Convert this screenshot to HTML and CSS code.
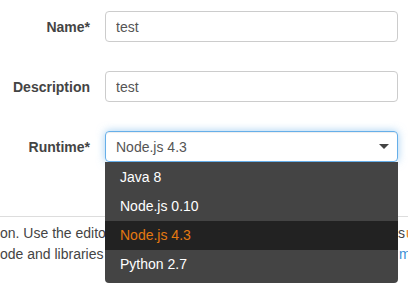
FILE: index.html
```html
<!DOCTYPE html>
<html lang="en">
<head>
    <meta charset="UTF-8" />
    <meta name="viewport" content="width=device-width, initial-scale=1.0"/>
    <title>Configure function</title>
    <link rel="stylesheet" href="styles.css">
</head>
<body>
<form class="fn-form">
    <div class="form-group">
        <label for="fnName">Name*</label>
        <input class="text-input" type="text" id="fnName" value="test">
    </div>
    <div class="form-group">
        <label for="fnDesc">Description</label>
        <input class="text-input" type="text" id="fnDesc" value="test">
    </div>
    <div class="form-group">
        <label>Runtime*</label>
        <div class="select-wrap">
            <div class="select-box">
                <span>Node.js 4.3</span>
                <svg class="caret" width="10" height="5" viewBox="0 0 10 5"><path d="M0 0H10L5 5Z" fill="#444"/></svg>
            </div>
            <ul class="select-menu">
                <li>Java 8</li>
                <li>Node.js 0.10</li>
                <li class="active">Node.js 4.3</li>
                <li>Python 2.7</li>
            </ul>
        </div>
    </div>
</form>

<div class="code-help">
    <div class="help-line">
        <span class="help-main">on. Use the editor if your code does not require custom libraries (other than the aws-sdk). If you need custom librarie</span>
        <span>s</span><a class="link-orange" href="#">upload</a>
    </div>
    <div class="help-line">
        <span class="help-main">ode and libraries as a .ZIP file. Learn more about deploying Lambda functions with your own code fro</span>
        <a class="link-blue" href="#">m</a>
    </div>
</div>
</body>
</html>
```

FILE: styles.css
```css
html, body {
    height: 100%;
}

body {
    font-family: 'Liberation Sans', Arial, sans-serif;
    font-size: 14px;
    margin: 0;
    padding: 0;
    background-color: #fff;
    color: #444;
    min-height: 290px;
    overflow-x: hidden;
}

.fn-form {
    padding: 11px 10px 54px 0;
    margin: 0;
}

.form-group {
    display: grid;
    grid-template-columns: 90px 1fr;
    column-gap: 15px;
    align-items: center;
    margin-bottom: 29px;
}

.form-group:last-child {
    margin-bottom: 0;
}

.form-group label {
    text-align: right;
    font-weight: bold;
    color: #444;
}

.text-input {
    width: 100%;
    height: 31px;
    padding: 0 10px;
    border: 1px solid #ccc;
    border-radius: 4px;
    font-family: inherit;
    font-size: 14px;
    color: #555;
    box-sizing: border-box;
    outline: none;
}

.select-wrap {
    position: relative;
}

.select-box {
    height: 31px;
    box-sizing: border-box;
    display: flex;
    align-items: center;
    justify-content: space-between;
    padding: 0 8px 0 10px;
    border: 1px solid #66afe9;
    border-radius: 4px;
    color: #555;
    box-shadow: inset 0 1px 1px rgba(0,0,0,0.075), 0 0 8px rgba(102,175,233,0.6);
}

.caret {
    display: block;
}

.select-menu {
    position: absolute;
    top: 100%;
    left: 0;
    right: 0;
    z-index: 5;
    list-style: none;
    margin: 0;
    padding: 1px 0 4px;
    background-color: #444;
    border-radius: 0 0 4px 4px;
}

.select-menu li {
    height: 29px;
    line-height: 29px;
    padding-left: 15px;
    color: #fff;
}

.select-menu li.active {
    background-color: #222;
    color: #e47911;
}

.code-help {
    border-top: 1px solid #ddd;
    padding-top: 6px;
    line-height: 21px;
    color: #444;
}

.help-line {
    display: flex;
    white-space: nowrap;
    overflow: hidden;
}

.help-main {
    flex: 0 0 398px;
    overflow: hidden;
}

.link-orange {
    color: #e47911;
    text-decoration: none;
    margin-left: 1px;
}

.link-blue {
    color: #3b8fd6;
    text-decoration: none;
    margin-left: 1px;
}
```
